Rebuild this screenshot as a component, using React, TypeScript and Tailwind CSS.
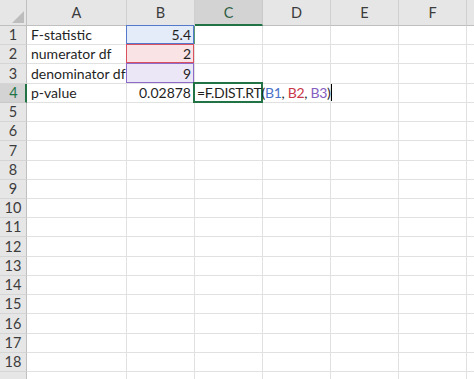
import React from "react";

const COLS = ["A", "B", "C", "D", "E", "F", "G"];
const ROWS = Array.from({ length: 19 }, (_, i) => i + 1);

const font = { fontFamily: "Lato, 'Liberation Sans', sans-serif" };

function Corner() {
  return (
    <div className="relative h-[26px] border-r border-b border-[#bfbfbf] bg-[#e6e6e6]">
      <svg className="absolute left-0 top-0" width="27" height="26" viewBox="0 0 27 26">
        <polygon points="12,23 24,11 24,23" fill="#bdbdbd" />
      </svg>
    </div>
  );
}

function ColHeader({ label }: { label: string }) {
  const sel = label === "C";
  return (
    <div
      className={
        "flex h-[26px] items-center justify-center border-r text-[14.5px] " +
        (sel
          ? "border-b-2 border-r-[#c9c9c9] border-b-[#217346] bg-[#d3d3d3] pt-[2px] text-[#2f5f43]"
          : "border-b border-r-[#d0d0d0] border-b-[#bfbfbf] bg-[#e6e6e6] pt-[1px] text-[#3c3c3c]")
      }
    >
      {label === "G" ? "" : label}
    </div>
  );
}

function RowHeader({ n }: { n: number }) {
  const sel = n === 4;
  return (
    <div
      className={
        "flex h-[19.22px] items-center justify-center border-b text-[14.5px] " +
        (sel
          ? "border-r-2 border-r-[#217346] border-b-[#c9c9c9] bg-[#d3d3d3] pl-[2px] text-[#217346]"
          : "border-r border-r-[#bfbfbf] border-b-[#d5d5d5] bg-[#e6e6e6] text-[#3c3c3c]")
      }
    >
      {n === 19 ? "" : n}
    </div>
  );
}

function Cell({
  children,
  align = "left",
  hl,
}: {
  children?: React.ReactNode;
  align?: "left" | "right";
  hl?: "blue" | "red" | "purple";
}) {
  const hlClass =
    hl === "blue"
      ? "bg-[#e4ebf9]"
      : hl === "red"
      ? "bg-[#f9e3e5]"
      : hl === "purple"
      ? "bg-[#ece7f7]"
      : "bg-white";
  const bdClass =
    hl === "blue"
      ? "border-[#5479cc]"
      : hl === "red"
      ? "border-[#d9505f]"
      : "border-[#8c6bc9]";
  return (
    <div
      className={
        "relative flex h-[19.22px] items-end overflow-visible whitespace-nowrap border-r border-b border-[#e1e1e1] pb-[1px] text-[14px] leading-[17px] text-[#1f1f1f] " +
        hlClass +
        (align === "right" ? " justify-end pr-[3px]" : " pl-[4px]")
      }
    >
      {hl && (
        <div className={"pointer-events-none absolute -left-px -top-px right-0 bottom-0 border " + bdClass} />
      )}
      {children}
    </div>
  );
}

function ActiveCell() {
  return (
    <div className="relative z-10 flex h-[19.22px] items-end overflow-visible whitespace-nowrap border-r border-b border-[#e1e1e1] bg-white pb-[1px] pl-[2px] text-[14px] leading-[17px] text-[#1f1f1f]">
      <div className="pointer-events-none absolute -left-[2px] -top-[2px] right-[-1px] bottom-[-1px] border-2 border-[#217346]" />
      <span className="relative tracking-[-0.3px]">
        =F.DIST.RT(
        <span className="text-[#4a72c8]">B1</span>,{" "}
        <span className="text-[#c9384a]">B2</span>,{" "}
        <span className="text-[#8560c0]">B3</span>)
        <span className="ml-[1px] inline-block h-[17px] w-px translate-y-[3px] bg-black align-baseline" />
      </span>
    </div>
  );
}

function BodyCell({ r, c }: { r: number; c: string }) {
  if (c === "A") {
    const t: Record<number, string> = {
      1: "F-statistic",
      2: "numerator df",
      3: "denominator df",
      4: "p-value",
    };
    return <Cell>{t[r]}</Cell>;
  }
  if (c === "B") {
    if (r === 1) return <Cell align="right" hl="blue">5.4</Cell>;
    if (r === 2) return <Cell align="right" hl="red">2</Cell>;
    if (r === 3) return <Cell align="right" hl="purple">9</Cell>;
    if (r === 4) return <Cell align="right">0.02878</Cell>;
  }
  if (c === "C" && r === 4) return <ActiveCell />;
  if (c === "C" && r === 1)
    return (
      <div className="relative h-[19.22px] border-r border-b border-[#e1e1e1] bg-white">
        <div className="absolute -left-px top-0 bottom-0 w-px bg-[#5a9a74]" />
      </div>
    );
  return <Cell />;
}

export default function App() {
  return (
    <div className="h-[379px] w-[474px] overflow-hidden bg-white" style={font}>
      <div className="grid w-[535px] grid-cols-[27px_100px_68px_68px_68px_68px_68px_68px]">
        <Corner />
        {COLS.map((c) => (
          <ColHeader key={c} label={c} />
        ))}
        {ROWS.map((r) => (
          <React.Fragment key={r}>
            <RowHeader n={r} />
            {COLS.map((c) => (
              <BodyCell key={c} r={r} c={c} />
            ))}
          </React.Fragment>
        ))}
      </div>
    </div>
  );
}
